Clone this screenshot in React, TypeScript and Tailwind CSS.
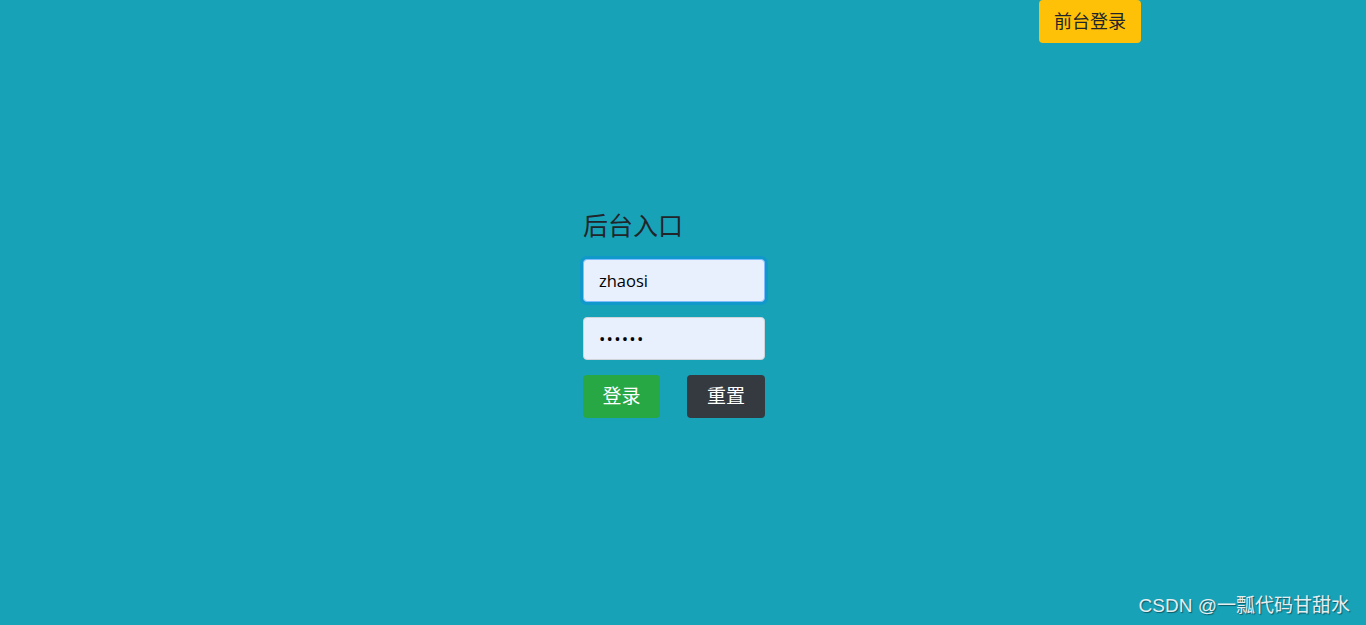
export default function App() {
  const font = { fontFamily: '"Open Sans", "Noto Sans CJK SC", sans-serif' };
  return (
    <div className="relative h-[625px] w-full overflow-hidden bg-[#17a2b8]" style={font}>
      {/* top bar */}
      <div className="flex justify-end pr-[225px]">
        <button className="h-[43px] w-[102px] rounded-[4px] bg-[#ffc107] text-[18px] text-[#212529]">
          前台登录
        </button>
      </div>

      {/* login form */}
      <div className="ml-[583px] mt-[166px] flex w-[182px] flex-col">
        <h4 className="h-[32px] text-[25px] leading-[32px] text-[#212529]">后台入口</h4>
        <input
          className="mt-[18px] h-[43px] w-[182px] rounded-[4px] border border-[#80bdff] bg-[#e8f0fe] px-[15px] text-[16.5px] text-black shadow-[0_0_0_3px_rgba(0,123,255,0.25)] outline-none"
          defaultValue="zhaosi"
        />
        <input
          type="password"
          className="mt-[15px] h-[43px] w-[182px] rounded-[4px] border border-[#ced4da] bg-[#e8f0fe] px-[15px] text-[17px] tracking-[1.2px] text-black outline-none"
          defaultValue="123456"
        />
        <div className="mt-[15px] flex justify-between">
          <button className="h-[43px] w-[77px] rounded-[4px] bg-[#28a745] text-[19px] text-white">登录</button>
          <button className="h-[43px] w-[78px] rounded-[4px] bg-[#343a40] text-[19px] text-white">重置</button>
        </div>
      </div>

      {/* watermark */}
      <div
        className="absolute bottom-[5px] right-[16px] text-[19px] text-[#e6eef0] [text-shadow:1px_1px_1px_rgba(0,0,0,0.45)]"
        style={{ fontFamily: '"Liberation Sans", "Noto Sans CJK SC", sans-serif' }}
      >
        CSDN @一瓢代码甘甜水
      </div>
    </div>
  );
}
